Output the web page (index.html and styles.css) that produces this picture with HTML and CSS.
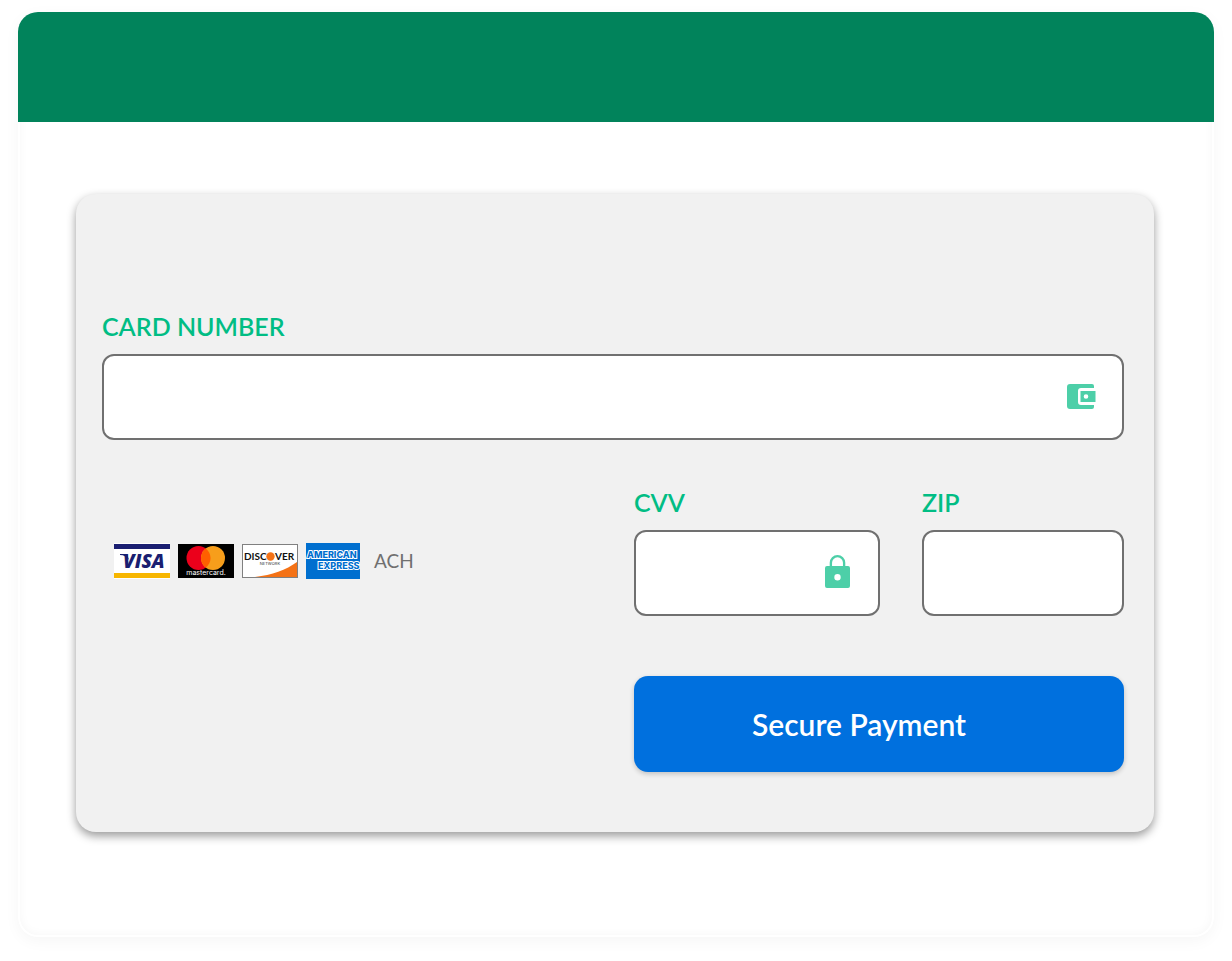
FILE: index.html
```html
<!DOCTYPE html>
<html lang="en">

<head>
    <meta charset="UTF-8">
    <meta name="viewport" content="width=device-width, initial-scale=1.0">
    <title>Secure Payment</title>
    <link rel="stylesheet" href="styles.css">
</head>

<body>

    <main class="page-card">
        <header class="page-header"></header>

        <form class="payment-form">
            <div class="field">
                <label for="cardNumber">CARD NUMBER</label>
                <div class="input-box">
                    <input type="text" id="cardNumber" inputmode="numeric" autocomplete="cc-number">
                    <svg class="field-icon" width="30" height="34" viewBox="0 0 30 34" aria-hidden="true">
                        <path fill="#4dcfa8" d="M4 4h22a2 2 0 0 1 2 2v2H15a3 3 0 0 0-3 3v11a3 3 0 0 0 3 3h13v2a2 2 0 0 1-2 2H4a3 3 0 0 1-3-3V7a3 3 0 0 1 3-3z" />
                        <path fill="#4dcfa8" fill-rule="evenodd" d="M14.500 11h15v11h-15zM20 14.200a2.300 2.300 0 1 0 0 4.600 2.300 2.300 0 0 0 0-4.600z" />
                    </svg>
                </div>
            </div>

            <div class="form-row details">
                <div class="methods">
                    <!-- Visa -->
                    <svg width="56" height="36" viewBox="0 0 56 36" role="img" aria-label="Visa">
                        <rect width="56" height="36" fill="#fff" />
                        <rect y="1" width="56" height="5" fill="#1a1f71" />
                        <rect y="30" width="56" height="5" fill="#f7b600" />
                        <text class="visa-text" x="9" y="25">VISA</text>
                        <path fill="#1a1f71" d="M6 11h7l2 6c-2-3-5-5-9-5z" />
                    </svg>
                    <!-- Mastercard -->
                    <svg width="56" height="36" viewBox="0 0 56 36" role="img" aria-label="Mastercard">
                        <rect y="1" width="56" height="34" fill="#000" />
                        <circle cx="20.500" cy="15" r="12" fill="#eb001b" />
                        <circle cx="35" cy="15" r="12" fill="#f79e1b" />
                        <path fill="#ff5f00" d="M27.750 5.400a12 12 0 0 1 0 19.200a12 12 0 0 1 0-19.200z" />
                        <text class="mastercard-text" x="28" y="32">mastercard.</text>
                    </svg>
                    <!-- Discover -->
                    <svg width="56" height="36" viewBox="0 0 56 36" role="img" aria-label="Discover Network">
                        <rect x=".5" y="1.500" width="55" height="33" fill="#fff" stroke="#808080" />
                        <path fill="#f47216" d="M55 19v15H13c17-2 31-7 42-15z" />
                        <text class="discover-text" x="2" y="17">DISC</text>
                        <circle cx="28.500" cy="13.500" r="4.200" fill="#f47216" />
                        <text class="discover-text" x="33" y="17">VER</text>
                        <text class="network-text" x="28" y="22">NETWORK</text>
                    </svg>
                    <!-- American Express -->
                    <svg width="54" height="36" viewBox="0 0 54 36" role="img" aria-label="American Express">
                        <rect width="54" height="36" fill="#006fcf" />
                        <text class="amex-text" x="1" y="15">AMERICAN</text>
                        <text class="amex-text" x="12" y="26">EXPRESS</text>
                    </svg>
                    <span class="ach">ACH</span>
                </div>

                <div class="security">
                    <div class="field">
                        <label for="cvv">CVV</label>
                        <div class="input-box">
                            <input type="text" id="cvv" inputmode="numeric" autocomplete="cc-csc">
                            <svg class="field-icon" width="27" height="36" viewBox="0 0 27 36" aria-hidden="true">
                                <path fill="#4dcfa8" fill-rule="evenodd" d="M2 11h2.700V7.800a7.800 7.800 0 0 1 15.600 0V11H23a2 2 0 0 1 2 2v18a2 2 0 0 1-2 2H2a2 2 0 0 1-2-2V13a2 2 0 0 1 2-2zM7.050 11h10.900V7.800a5.450 5.450 0 0 0-10.900 0zM12.500 19a3.200 3.200 0 1 0 0 6.400 3.200 3.200 0 0 0 0-6.400z" />
                            </svg>
                        </div>
                    </div>
                    <div class="field">
                        <label for="zip">ZIP</label>
                        <div class="input-box">
                            <input type="text" id="zip" autocomplete="postal-code">
                        </div>
                    </div>
                </div>
            </div>

            <div class="form-row actions">
                <button type="submit" class="pay-button">Secure Payment</button>
            </div>
        </form>
    </main>

</body>

</html>
```

FILE: styles.css
```css
* {
    box-sizing: border-box;
}

body {
    font-family: Lato, "Open Sans", sans-serif;
    margin: 0;
    padding: 12px 18px 24px;
    background-color: #fff;
}

.page-card {
    padding-bottom: 105px;
    border-radius: 20px;
    background-color: #fff;
    box-shadow: 0 4px 16px rgba(0, 0, 0, 0.04), inset 0 0 0 2px #fff, inset 0 0 12px rgba(0, 0, 0, 0.05);
}

.page-header {
    height: 110px;
    border-radius: 20px 20px 0 0;
    background-color: #01835b;
}

.payment-form {
    margin: 72px 60px 0 58px;
    padding: 118px 30px 60px 26px;
    border-radius: 20px;
    background-color: #f1f1f1;
    box-shadow: 0 4px 10px rgba(0, 0, 0, 0.4);
}

.field {
    display: flex;
    flex-direction: column;
    gap: 14px;
    min-width: 0;
}

.field label {
    color: #01bd84;
    font-size: 25px;
    font-weight: 600;
    line-height: 28px;
}

.input-box {
    display: flex;
    align-items: center;
    height: 86px;
    padding: 0 26px;
    border: 2px solid #707070;
    border-radius: 12px;
    background-color: #fff;
}

.input-box input {
    flex: 1;
    min-width: 0;
    height: 100%;
    padding: 0;
    border: none;
    outline: none;
    background: none;
    font-family: inherit;
    font-size: 25px;
}

.input-box:focus-within {
    border-color: #01bd84;
}

.field-icon {
    flex: none;
}

/* left side for payment methods, right side for cvv, zip and the button */
.form-row {
    display: grid;
    grid-template-columns: minmax(0, 532fr) minmax(0, 490fr);
}

.details {
    margin-top: 48px;
}

.actions {
    margin-top: 60px;
}

.methods {
    display: flex;
    align-items: center;
    gap: 8px;
    padding: 18px 0 0 12px;
}

.security {
    display: grid;
    grid-template-columns: minmax(0, 246fr) minmax(0, 202fr);
    gap: 42px;
}

.ach {
    margin-left: 6px;
    color: #707070;
    font-size: 19px;
    line-height: 24px;
}

.visa-text {
    fill: #1a1f71;
    font-size: 19px;
    font-weight: 800;
    font-style: italic;
    font-family: "Open Sans", sans-serif;
}

.mastercard-text {
    fill: #fff;
    font-size: 7px;
    font-family: Inter, sans-serif;
    text-anchor: middle;
}

.discover-text {
    fill: #111;
    font-size: 10px;
    font-weight: 700;
    font-family: Lato, sans-serif;
}

.network-text {
    fill: #333;
    font-size: 4px;
    font-family: Inter, sans-serif;
    text-anchor: middle;
}

.amex-text {
    fill: #006fcf;
    stroke: #fff;
    stroke-width: 2px;
    paint-order: stroke;
    font-size: 9px;
    font-weight: 800;
    font-family: Inter, sans-serif;
}

.pay-button {
    grid-column: 2;
    height: 96px;
    padding: 0 40px 0 0;
    border: none;
    border-radius: 14px;
    background-color: #0070de;
    box-shadow: 0 2px 5px rgba(0, 0, 0, 0.2);
    color: #fff;
    font-family: inherit;
    font-size: 30px;
    font-weight: 600;
    cursor: pointer;
}
```
